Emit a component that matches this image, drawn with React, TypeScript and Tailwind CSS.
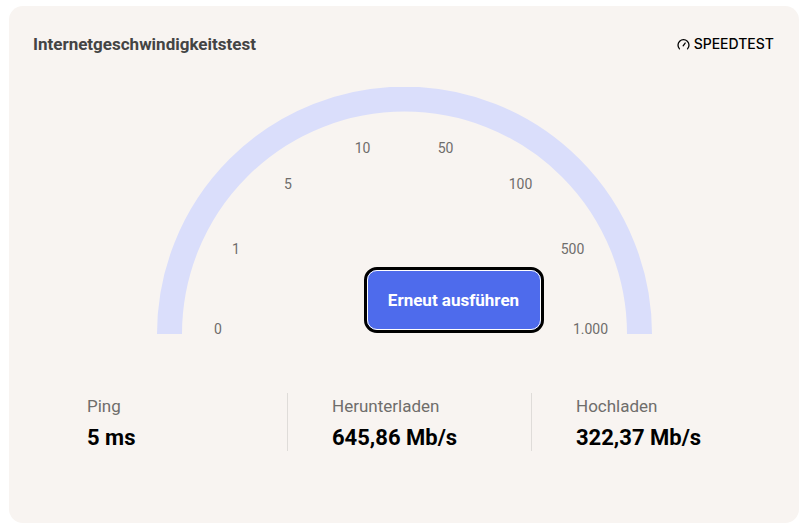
const TICKS = [
  { label: '0', x: 218.5, y: 329 },
  { label: '1', x: 236.5, y: 249 },
  { label: '5', x: 288.5, y: 184 },
  { label: '10', x: 363, y: 148 },
  { label: '50', x: 446, y: 148 },
  { label: '100', x: 521, y: 184 },
  { label: '500', x: 573, y: 249 },
  { label: '1.000', x: 591, y: 329 },
];

const STATS = [
  { label: 'Ping', value: '5 ms' },
  { label: 'Herunterladen', value: '645,86 Mb/s' },
  { label: 'Hochladen', value: '322,37 Mb/s' },
];

const Gauge = () => (
  <div className="relative mt-[33px] h-[247px] w-[495px] self-center">
    <svg width="495" height="247" viewBox="0 0 495 247" className="block">
      <path d="M12.5 247 A235 235 0 0 1 482.5 247" fill="none" stroke="#dadefb" strokeWidth="25" />
    </svg>
    {TICKS.map((tick) => (
      <span
        key={tick.label}
        className="absolute -translate-x-1/2 -translate-y-1/2 text-sm leading-5 text-[#6f6d6b]"
        style={{ left: tick.x - 157, top: tick.y - 87 }}
      >
        {tick.label}
      </span>
    ))}
    <button className="absolute left-[207px] top-[180px] h-[66px] w-[180px] rounded-[13px] border-[3px] border-black bg-[#4e6bec] pt-[1px] text-[17px] font-bold text-white outline outline-1 -outline-offset-[4px] outline-white">
      Erneut ausführen
    </button>
  </div>
);

const Logo = () => (
  <div className="flex items-center gap-[4px] text-black">
    <svg width="13" height="11" viewBox="0 0 14 12" fill="none" stroke="currentColor" strokeWidth="1.4" strokeLinecap="round">
      <path d="M2.6 10.8 A6 6 0 1 1 11.4 10.8" />
      <path d="M6.6 7.4 L8.8 4.4" />
    </svg>
    <span className="text-[14px] leading-none font-medium [font-family:Inter,sans-serif]">SPEEDTEST</span>
  </div>
);

export default function App() {
  return (
    <div className="h-[528px] w-[803px] bg-white pt-[6px] pr-[4px] pb-[5px] pl-[9px] [font-family:Roboto,sans-serif]">
      <div className="flex h-full flex-col rounded-[14px] bg-[#f8f4f1]">
        <div className="flex items-center justify-between pt-[28px] pr-[25px] pl-[24px]">
          <h1 className="text-[17px] leading-5 font-bold text-[#444444]">Internetgeschwindigkeitstest</h1>
          <Logo />
        </div>

        <Gauge />

        <div className="mt-[59px] ml-[34px] grid w-[733px] grid-cols-[245px_244px_1fr]">
          {STATS.map((stat, index) => (
            <div
              key={stat.label}
              className={`h-[58px] pt-[1px] pl-[44px] ${index < 2 ? 'border-r border-[#dfdcd9]' : ''}`}
            >
              <div className="text-[17px] leading-6 text-[#6f6d6b]">{stat.label}</div>
              <div className="mt-[6px] text-[22px] leading-7 font-bold text-black">{stat.value}</div>
            </div>
          ))}
        </div>
      </div>
    </div>
  );
}
